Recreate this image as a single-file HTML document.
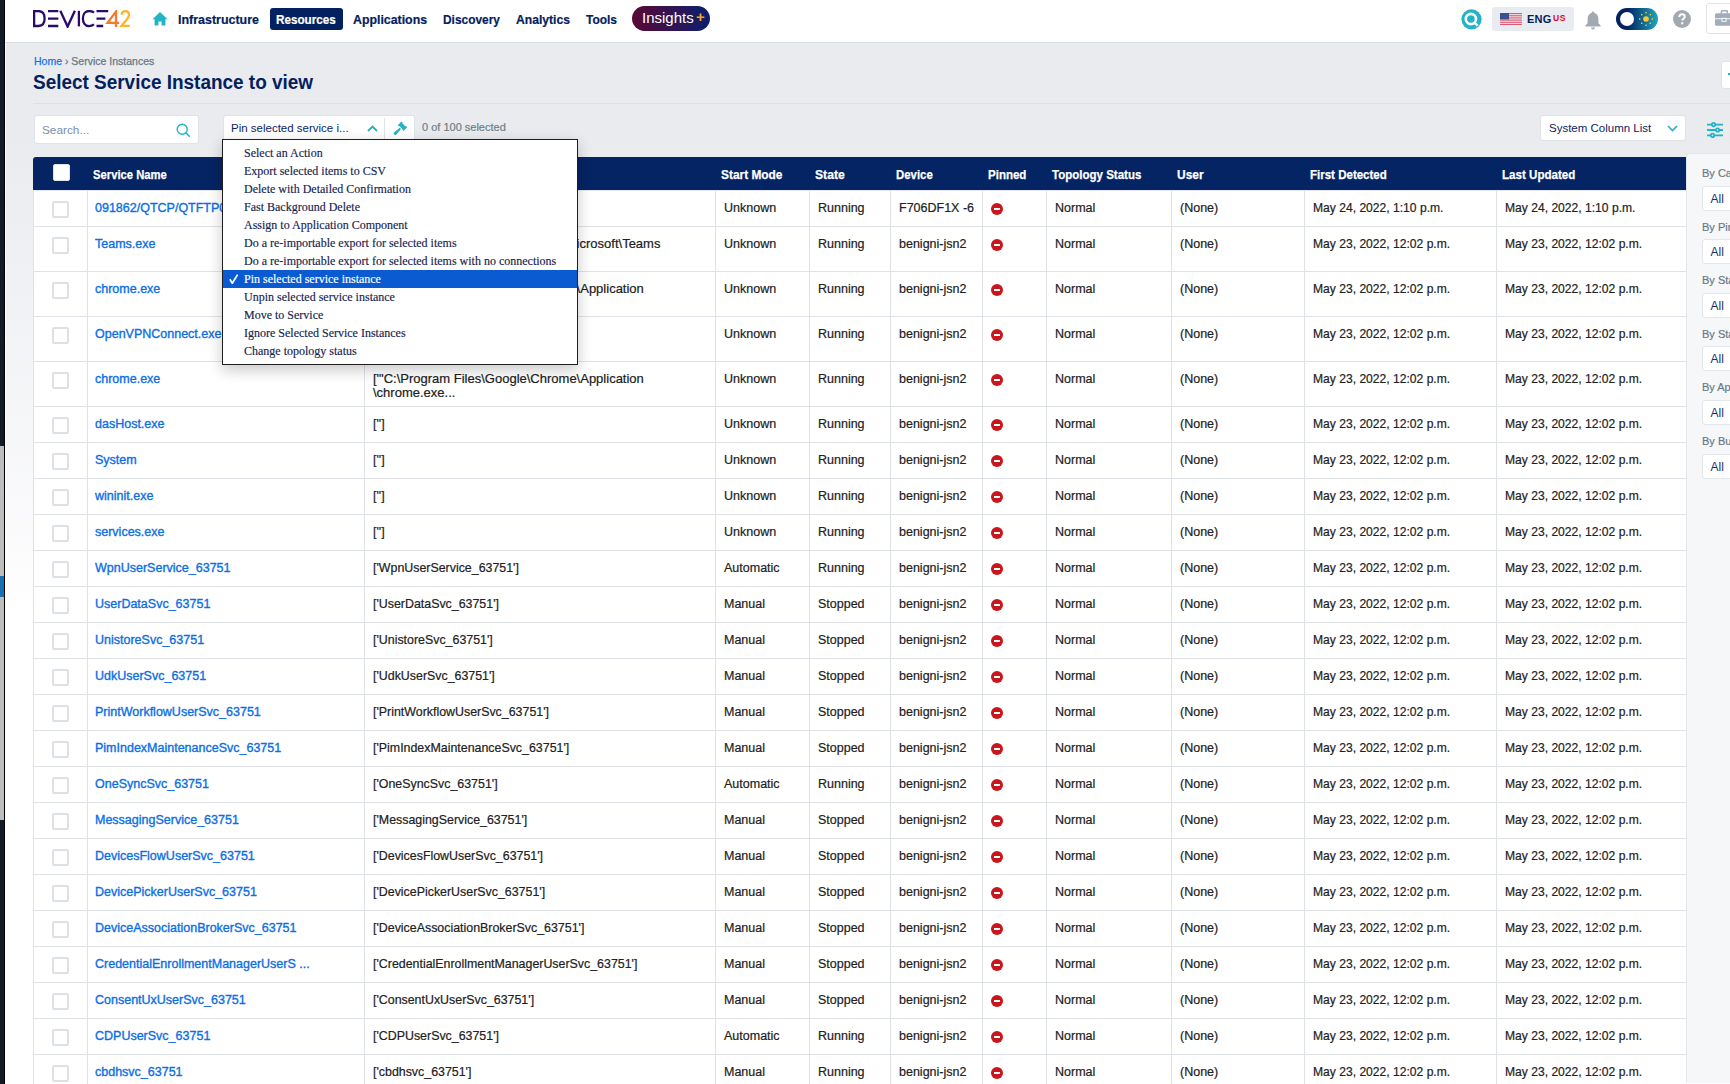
<!DOCTYPE html>
<html><head><meta charset="utf-8"><style>
*{box-sizing:border-box;margin:0;padding:0}
html,body{width:1730px;height:1084px;overflow:hidden}
body{position:relative;font-family:"Liberation Sans",sans-serif;background:linear-gradient(180deg,#e9ebef 0px,#e9ebef 130px,#fcfcfd 570px,#fff 610px);}
#strip{position:absolute;left:0;top:0;width:5px;height:1084px;background:#131b29;border-right:1px solid #000}
#strip .g{position:absolute;left:0;top:446px;width:4px;height:374px;background:#bdbdbd}
#strip .bl{position:absolute;left:0;top:576px;width:4px;height:21px;background:#1a6fb1}
#wline{position:absolute;left:5px;top:43px;width:1px;height:1041px;background:#fff}
#hdr{position:absolute;left:5px;top:0;width:1725px;height:43px;background:#fff;border-bottom:1px solid #dadde2}
#logo{position:absolute;left:28px;top:10px}
.nav{position:absolute;top:11.5px;-webkit-text-stroke:0.2px currentColor;font-size:13px;font-weight:700;color:#03215f;line-height:16px;white-space:nowrap;transform-origin:0 0}
#res{position:absolute;left:265px;top:8px;width:73px;height:22px;background:#03215f;border-radius:3px}
#ins{position:absolute;left:627px;top:6px;width:78px;height:25px;border-radius:13px;background:linear-gradient(90deg,#5a0834,#0a1f6e)}
#ins span{position:absolute;left:10px;top:4px;color:#fff;font-size:15px;line-height:16px}
#ins b{position:absolute;left:64px;top:3px;color:#f7a11a;font-size:15px;line-height:16px;font-weight:700}
#bc{position:absolute;left:34px;top:54.6px;font-size:10.5px;line-height:13px;color:#6a7884;white-space:nowrap;-webkit-text-stroke:0.25px currentColor}
#bc a{color:#1673e6;text-decoration:none}
#title{position:absolute;left:33px;top:71px;transform:scaleX(0.947);transform-origin:0 0;font-size:20px;font-weight:700;color:#03215f;line-height:22px;white-space:nowrap}
#hr{position:absolute;left:33px;top:103px;width:1697px;height:1px;background:#dcdfe4}
#search{position:absolute;left:34px;top:115px;width:165px;height:29px;background:#fff;border:1px solid #dfe2e6;border-radius:3px}
#search span{position:absolute;left:7px;top:7px;font-size:11.8px;line-height:14px;color:#7b8eae}
#sel{position:absolute;left:223px;top:115px;width:192px;height:28px;background:#fff;border:1px solid #dfe2e6;border-radius:3px}
#sel span{position:absolute;left:7px;top:5px;font-size:11.5px;line-height:14px;color:#0c2461;white-space:nowrap}
#sel .dv{position:absolute;left:160px;top:2px;width:1px;height:24px;background:#dfe2e6}
#cnt{position:absolute;left:422px;top:121px;font-size:11px;line-height:13px;color:#6e7e8a;-webkit-text-stroke:0.2px currentColor;white-space:nowrap}
#scl{position:absolute;left:1540px;top:115px;width:146px;height:26px;background:#fff;border:1px solid #dfe2e6;border-radius:3px}
#scl span{position:absolute;left:8px;top:6px;font-size:11.5px;line-height:13px;color:#0c2461;white-space:nowrap}
#tbl{position:absolute;left:33px;top:157px;width:1653px}
#thead{position:absolute;left:0;top:0;width:1653px;height:33px;background:#052463;border-radius:3px 0 0 0}
.hc{position:absolute;top:10.5px;margin-left:6px;-webkit-text-stroke:0.25px currentColor;font-size:12.8px;font-weight:700;color:#fff;line-height:14px;white-space:nowrap;transform-origin:0 0}
.hcb{position:absolute;left:20px;top:7px;width:17px;height:17px;background:#fff;border:1px solid #dfe2e7;border-radius:2px}
#tbody{position:absolute;left:0;top:33px;width:1653px;height:900px;background:#fff}
.r{position:absolute;left:0;width:1653px;border-bottom:1px solid #dfe2e7}
.c{position:absolute;top:0;height:100%;-webkit-text-stroke:0.2px currentColor;padding:11px 0 0 9px;font-size:12.5px;line-height:13px;color:#212121;white-space:nowrap;overflow:hidden}
.c.d{font-size:12.4px;padding-top:10.6px}
.r1 .c.d{padding-top:11.6px}
.c.d2{font-size:13px;line-height:13.5px;padding-top:10.2px}
.lk{color:#0b6ee6;position:relative;left:-1px;-webkit-text-stroke:0.35px currentColor}
.r1 .c{padding-top:12px}
.r1 .cb{top:11px}
.dt{font-size:12.1px}
.cb{position:absolute;left:19px;top:10px;width:17px;height:17px;border:2px solid #dde0e5;border-radius:2px;background:#fff}
.vl{position:absolute;top:1px;width:1px;height:900px;background:#dfe2e7}
.pin{position:absolute;left:9px;top:12px;width:12px;height:12px;border-radius:50%;background:#c9161d}
.r1 .pin{top:13px}
.pin:after{content:"";position:absolute;left:3px;top:5px;width:6px;height:2px;background:#fff}
#fpanel{position:absolute;left:1686px;top:153px;width:44px;height:930px;background:#f6f7f9;border-left:1px solid #e3e6ea;border-top:1px solid #e3e6ea;border-top-left-radius:3px}
.fl{position:absolute;left:15px;font-size:11px;line-height:13px;color:#6a7884;white-space:nowrap;-webkit-text-stroke:0.2px currentColor}
.fb{position:absolute;left:15px;width:60px;height:25px;background:#fff;border:1px solid #e3e6ea;border-radius:3px;font-size:12px;line-height:14px;color:#1c2f6b;padding:5px 0 0 7.5px}
#menu{position:absolute;left:222px;top:139px;width:356px;height:226px;background:#fff;border:1px solid #1f1f1f;padding-top:4px;box-shadow:0 5px 14px rgba(0,0,0,0.22)}
.mi{position:relative;height:18px;-webkit-text-stroke:0.15px currentColor;padding-left:21px;font-family:"Liberation Serif",serif;font-size:12px;line-height:18px;color:#15234f;white-space:nowrap}
.mi.sel{background:#0a5bd2;color:#fff}
.mi b{position:absolute;left:5.5px;top:0;font-weight:700;font-family:"Liberation Sans",sans-serif;font-size:13.5px;line-height:18px}

</style></head><body>
<div id="hdr"></div>
<div id="strip"><div class="g"></div><div class="bl"></div></div>
<div id="wline"></div>
<svg id="logo" style="position:absolute;left:33px;top:10px" width="98" height="18" viewBox="0 0 98 18">
 <g fill="none" stroke="#2a0b6d" stroke-width="2.3">
  <path d="M1.1 1.1H5.5C9.8 1.1 11.6 4.6 11.6 8.6C11.6 12.6 9.8 16 5.5 16H1.1Z"/>
  <path d="M15 1.1H25.3M15 8.6H25.3M15 16H25.3"/>
  <path d="M27.3 0.8L34.6 16.6L41.9 0.8"/>
  <path d="M45.9 0.8V16.4"/>
  <path d="M61 2.6C59.4 1.4 57.8 1 56 1C51.8 1 49.9 4.6 49.9 8.6C49.9 12.6 51.8 16.1 56 16.1C57.8 16.1 59.4 15.6 61 14.4"/>
  <path d="M63.5 1.2H75.2M63.5 8.6H72.4M63.5 16H70.2"/>
 </g>
 <path d="M83 17V1.6L74.6 12.8H86.2" fill="none" stroke="#f47a2f" stroke-width="2.3"/>
 <path d="M88.4 4.6C89 2.4 90.6 1.2 92.3 1.2C94.6 1.2 96 2.9 96 5C96 7.3 94.7 8.8 93 10.5L88.4 15.9H96.8" fill="none" stroke="#fbb42b" stroke-width="2.3"/>
</svg>
<svg style="position:absolute;left:152px;top:12px" width="16" height="14" viewBox="0 0 16 14"><path d="M8 0L0.5 7.2H2.6V13.6H6.4V9.6H9.6V13.6H13.4V7.2H15.5Z" fill="#22b3c6"/></svg>
<div class="nav" style="left:178px;transform:scaleX(0.958)">Infrastructure</div>
<div id="res" style="left:270px"></div>
<div class="nav" style="left:276px;color:#fff;transform:scaleX(0.9)">Resources</div>
<div class="nav" style="left:353px;transform:scaleX(0.949)">Applications</div>
<div class="nav" style="left:443px;transform:scaleX(0.916)">Discovery</div>
<div class="nav" style="left:516px;transform:scaleX(0.934)">Analytics</div>
<div class="nav" style="left:586px;transform:scaleX(0.92)">Tools</div>
<div id="ins" style="left:632px"><span>Insights</span><b>+</b></div>

<svg style="position:absolute;left:1460.5px;top:8.5px" width="21" height="21" viewBox="0 0 21 21"><circle cx="10.5" cy="10.3" r="10.1" fill="#22b3c6"/><circle cx="9.9" cy="10" r="5.1" fill="none" stroke="#fff" stroke-width="2.6"/><path d="M13.4 13.6L16.6 16.6" stroke="#fff" stroke-width="2.6"/></svg>
<div style="position:absolute;left:1492px;top:7px;width:82px;height:24px;background:#e8ebef;border-radius:3px"></div>
<svg style="position:absolute;left:1500px;top:13px" width="22" height="12" viewBox="0 0 22 12"><rect width="22" height="12" fill="#f4eef0"/><g fill="#d9506a"><rect y="0.00" width="22" height="0.92"/><rect y="1.85" width="22" height="0.92"/><rect y="3.69" width="22" height="0.92"/><rect y="5.54" width="22" height="0.92"/><rect y="7.38" width="22" height="0.92"/><rect y="9.23" width="22" height="0.92"/><rect y="11.08" width="22" height="0.92"/></g><rect width="9" height="6.46" fill="#3d4f93"/></svg>
<div style="position:absolute;left:1527px;top:12px;font-size:11px;font-weight:700;color:#03215f;letter-spacing:0.2px;line-height:14px">ENG</div>
<div style="position:absolute;left:1553px;top:12.7px;font-size:8.5px;font-weight:700;color:#e8001c;letter-spacing:0.5px;line-height:10px">US</div>
<svg style="position:absolute;left:1585px;top:11px" width="16" height="19" viewBox="0 0 16 19"><path d="M8 0.5C8.8 0.5 9.2 1 9.2 1.8C12 2.6 13.4 5 13.4 8V12.2L15.6 14.4V15.6H0.4V14.4L2.6 12.2V8C2.6 5 4 2.6 6.8 1.8C6.8 1 7.2 0.5 8 0.5Z" fill="#a3a9b1"/><path d="M6 16.6H10C10 17.8 9 18.4 8 18.4C7 18.4 6 17.8 6 16.6Z" fill="#a3a9b1"/></svg>
<div style="position:absolute;left:1616px;top:8px;width:42px;height:22px;border-radius:11px;background:linear-gradient(90deg,#03205f 25%,#1fa6bd)"></div>
<div style="position:absolute;left:1620px;top:12px;width:14px;height:14px;border-radius:50%;background:#fff"></div>
<svg style="position:absolute;left:1639px;top:12px" width="14" height="14" viewBox="0 0 14 14"><circle cx="7" cy="7" r="2.8" fill="#fbc933"/><g fill="#fbc933"><rect x="6.3" y="0" width="1.4" height="1.4"/><rect x="6.3" y="12.6" width="1.4" height="1.4"/><rect x="0" y="6.3" width="1.4" height="1.4"/><rect x="12.6" y="6.3" width="1.4" height="1.4"/><rect x="2" y="2" width="1.4" height="1.4"/><rect x="10.6" y="2" width="1.4" height="1.4"/><rect x="2" y="10.6" width="1.4" height="1.4"/><rect x="10.6" y="10.6" width="1.4" height="1.4"/></g></svg>
<svg style="position:absolute;left:1673px;top:10px" width="18" height="18" viewBox="0 0 18 18"><circle cx="9" cy="9" r="9" fill="#a3a9b1"/><path d="M6.3 7C6.3 5.3 7.5 4.3 9.1 4.3C10.7 4.3 11.8 5.3 11.8 6.6C11.8 8.5 9.3 8.6 9.3 10.6" fill="none" stroke="#fff" stroke-width="2"/><rect x="8.2" y="12.2" width="2.1" height="2.1" fill="#fff"/></svg>
<div style="position:absolute;left:1706px;top:3px;width:40px;height:31px;background:#fff;border:1px solid #e0e3e7;border-radius:3px"></div>
<svg style="position:absolute;left:1715px;top:9.5px" width="16" height="17" viewBox="0 0 16 17"><path d="M6.4 3.4V1.7Q6.4 0.7 7.4 0.7H11.4Q12.4 0.7 12.4 1.7V3.4" fill="none" stroke="#a2adbb" stroke-width="1.5"/><rect x="0" y="3.3" width="18" height="12.5" rx="1.6" fill="#a2adbb"/><rect x="0" y="8.3" width="18" height="0.9" fill="#fff"/><rect x="6.9" y="8.3" width="4.2" height="3" fill="#a2adbb" stroke="#fff" stroke-width="0.9"/></svg>

<div id="bc"><a>Home</a> › Service Instances</div>
<div id="title">Select Service Instance to view</div>
<div style="position:absolute;left:1721px;top:61px;width:20px;height:28px;background:#fff;border:1px solid #dfe2e6;border-radius:3px"></div><div style="position:absolute;left:1728px;top:73px;width:3px;height:2px;background:#22b3c6"></div>
<div id="hr"></div>
<div id="search"><span>Search...</span>
<svg style="position:absolute;left:141px;top:7px" width="15" height="15" viewBox="0 0 15 15"><circle cx="6.2" cy="6.2" r="5" fill="none" stroke="#22b3c6" stroke-width="1.4"/><path d="M9.8 9.8L13.8 13.8" stroke="#22b3c6" stroke-width="1.6"/></svg>
</div>
<div id="sel"><span>Pin selected service i...</span>
<svg style="position:absolute;left:143px;top:8.5px" width="11" height="7" viewBox="0 0 11 7"><path d="M1 6L5.5 1.5L10 6" fill="none" stroke="#22b3c6" stroke-width="1.8"/></svg>
<div class="dv"></div>
<svg style="position:absolute;left:169px;top:4px" width="16" height="16" viewBox="0 0 16 16"><g transform="translate(9.5 6.25) rotate(45)" fill="#22b3c6"><path d="M-4.1 -2.6H-2.3V-2H2.3V-2.6H4.1V2.6H2.3V2H-2.3V2.6H-4.1Z"/><path d="M-0.9 3.1H0.9L1.5 10.4Q1.5 11.6 0 11.6Q-1.5 11.6 -1.5 10.4Z"/></g></svg>
</div>
<div id="cnt">0 of 100 selected</div>
<div id="scl"><span>System Column List</span>
<svg style="position:absolute;left:126px;top:8.5px" width="11" height="7" viewBox="0 0 11 7"><path d="M1 1L5.5 5.5L10 1" fill="none" stroke="#22b3c6" stroke-width="1.6"/></svg>
</div>
<svg style="position:absolute;left:1707px;top:122px" width="16" height="16" viewBox="0 0 16 16"><g stroke="#22b3c6" stroke-width="1.8" fill="#ebedf1"><path d="M0 2.6H16M0 8H16M0 13.4H16" fill="none"/><circle cx="6.5" cy="2.6" r="1.7"/><circle cx="10.5" cy="8" r="1.7"/><circle cx="5.5" cy="13.4" r="1.7"/></g></svg>

<div id="tbl">
<div id="thead"><div class="hcb"></div><div class="hc" style="left:54px;transform:scaleX(0.88)">Service Name</div><div class="hc" style="left:331px;transform:scaleX(0.92)">Command</div><div class="hc" style="left:682px;transform:scaleX(0.93)">Start Mode</div><div class="hc" style="left:776px;transform:scaleX(0.95)">State</div><div class="hc" style="left:857px;transform:scaleX(0.89)">Device</div><div class="hc" style="left:949px;transform:scaleX(0.9)">Pinned</div><div class="hc" style="left:1013px;transform:scaleX(0.9)">Topology Status</div><div class="hc" style="left:1138px;transform:scaleX(0.935)">User</div><div class="hc" style="left:1271px;transform:scaleX(0.9)">First Detected</div><div class="hc" style="left:1463px;transform:scaleX(0.905)">Last Updated</div></div>
<div id="tbody"><div class="r r1" style="top:0px;height:37px"><div class="cb"></div><div class="c" style="left:54px;width:277px"><span class="lk">091862/QTCP/QTFTP0</span></div><div class="c d" style="left:331px;width:351px"></div><div class="c" style="left:682px;width:94px">Unknown</div><div class="c" style="left:776px;width:81px">Running</div><div class="c" style="left:857px;width:92px">F706DF1X -6</div><div class="c" style="left:949px;width:64px"><i class="pin"></i></div><div class="c" style="left:1013px;width:125px">Normal</div><div class="c" style="left:1138px;width:133px">(None)</div><div class="c dt" style="left:1271px;width:192px">May 24, 2022, 1:10 p.m.</div><div class="c dt" style="left:1463px;width:190px">May 24, 2022, 1:10 p.m.</div></div><div class="r" style="top:37px;height:45px"><div class="cb"></div><div class="c" style="left:54px;width:277px"><span class="lk">Teams.exe</span></div><div class="c d d2" style="left:331px;width:351px">[&#39;"C:\Users\admin\AppData\Local\Microsoft\Teams<br>\current\Teams.exe...</div><div class="c" style="left:682px;width:94px">Unknown</div><div class="c" style="left:776px;width:81px">Running</div><div class="c" style="left:857px;width:92px">benigni-jsn2</div><div class="c" style="left:949px;width:64px"><i class="pin"></i></div><div class="c" style="left:1013px;width:125px">Normal</div><div class="c" style="left:1138px;width:133px">(None)</div><div class="c dt" style="left:1271px;width:192px">May 23, 2022, 12:02 p.m.</div><div class="c dt" style="left:1463px;width:190px">May 23, 2022, 12:02 p.m.</div></div><div class="r" style="top:82px;height:45px"><div class="cb"></div><div class="c" style="left:54px;width:277px"><span class="lk">chrome.exe</span></div><div class="c d d2" style="left:331px;width:351px">[&#39;"C:\Program Files\Google\Chrome\Application<br>\chrome.exe...</div><div class="c" style="left:682px;width:94px">Unknown</div><div class="c" style="left:776px;width:81px">Running</div><div class="c" style="left:857px;width:92px">benigni-jsn2</div><div class="c" style="left:949px;width:64px"><i class="pin"></i></div><div class="c" style="left:1013px;width:125px">Normal</div><div class="c" style="left:1138px;width:133px">(None)</div><div class="c dt" style="left:1271px;width:192px">May 23, 2022, 12:02 p.m.</div><div class="c dt" style="left:1463px;width:190px">May 23, 2022, 12:02 p.m.</div></div><div class="r" style="top:127px;height:45px"><div class="cb"></div><div class="c" style="left:54px;width:277px"><span class="lk">OpenVPNConnect.exe</span></div><div class="c d d2" style="left:331px;width:351px">[&#39;"C:\Program Files\OpenVPN<br>Connect\OpenVPNConnect.exe...</div><div class="c" style="left:682px;width:94px">Unknown</div><div class="c" style="left:776px;width:81px">Running</div><div class="c" style="left:857px;width:92px">benigni-jsn2</div><div class="c" style="left:949px;width:64px"><i class="pin"></i></div><div class="c" style="left:1013px;width:125px">Normal</div><div class="c" style="left:1138px;width:133px">(None)</div><div class="c dt" style="left:1271px;width:192px">May 23, 2022, 12:02 p.m.</div><div class="c dt" style="left:1463px;width:190px">May 23, 2022, 12:02 p.m.</div></div><div class="r" style="top:172px;height:45px"><div class="cb"></div><div class="c" style="left:54px;width:277px"><span class="lk">chrome.exe</span></div><div class="c d d2" style="left:331px;width:351px">[&#39;"C:\Program Files\Google\Chrome\Application<br>\chrome.exe...</div><div class="c" style="left:682px;width:94px">Unknown</div><div class="c" style="left:776px;width:81px">Running</div><div class="c" style="left:857px;width:92px">benigni-jsn2</div><div class="c" style="left:949px;width:64px"><i class="pin"></i></div><div class="c" style="left:1013px;width:125px">Normal</div><div class="c" style="left:1138px;width:133px">(None)</div><div class="c dt" style="left:1271px;width:192px">May 23, 2022, 12:02 p.m.</div><div class="c dt" style="left:1463px;width:190px">May 23, 2022, 12:02 p.m.</div></div><div class="r" style="top:217px;height:36px"><div class="cb"></div><div class="c" style="left:54px;width:277px"><span class="lk">dasHost.exe</span></div><div class="c d" style="left:331px;width:351px">[&#39;&#39;]</div><div class="c" style="left:682px;width:94px">Unknown</div><div class="c" style="left:776px;width:81px">Running</div><div class="c" style="left:857px;width:92px">benigni-jsn2</div><div class="c" style="left:949px;width:64px"><i class="pin"></i></div><div class="c" style="left:1013px;width:125px">Normal</div><div class="c" style="left:1138px;width:133px">(None)</div><div class="c dt" style="left:1271px;width:192px">May 23, 2022, 12:02 p.m.</div><div class="c dt" style="left:1463px;width:190px">May 23, 2022, 12:02 p.m.</div></div><div class="r" style="top:253px;height:36px"><div class="cb"></div><div class="c" style="left:54px;width:277px"><span class="lk">System</span></div><div class="c d" style="left:331px;width:351px">[&#39;&#39;]</div><div class="c" style="left:682px;width:94px">Unknown</div><div class="c" style="left:776px;width:81px">Running</div><div class="c" style="left:857px;width:92px">benigni-jsn2</div><div class="c" style="left:949px;width:64px"><i class="pin"></i></div><div class="c" style="left:1013px;width:125px">Normal</div><div class="c" style="left:1138px;width:133px">(None)</div><div class="c dt" style="left:1271px;width:192px">May 23, 2022, 12:02 p.m.</div><div class="c dt" style="left:1463px;width:190px">May 23, 2022, 12:02 p.m.</div></div><div class="r" style="top:289px;height:36px"><div class="cb"></div><div class="c" style="left:54px;width:277px"><span class="lk">wininit.exe</span></div><div class="c d" style="left:331px;width:351px">[&#39;&#39;]</div><div class="c" style="left:682px;width:94px">Unknown</div><div class="c" style="left:776px;width:81px">Running</div><div class="c" style="left:857px;width:92px">benigni-jsn2</div><div class="c" style="left:949px;width:64px"><i class="pin"></i></div><div class="c" style="left:1013px;width:125px">Normal</div><div class="c" style="left:1138px;width:133px">(None)</div><div class="c dt" style="left:1271px;width:192px">May 23, 2022, 12:02 p.m.</div><div class="c dt" style="left:1463px;width:190px">May 23, 2022, 12:02 p.m.</div></div><div class="r" style="top:325px;height:36px"><div class="cb"></div><div class="c" style="left:54px;width:277px"><span class="lk">services.exe</span></div><div class="c d" style="left:331px;width:351px">[&#39;&#39;]</div><div class="c" style="left:682px;width:94px">Unknown</div><div class="c" style="left:776px;width:81px">Running</div><div class="c" style="left:857px;width:92px">benigni-jsn2</div><div class="c" style="left:949px;width:64px"><i class="pin"></i></div><div class="c" style="left:1013px;width:125px">Normal</div><div class="c" style="left:1138px;width:133px">(None)</div><div class="c dt" style="left:1271px;width:192px">May 23, 2022, 12:02 p.m.</div><div class="c dt" style="left:1463px;width:190px">May 23, 2022, 12:02 p.m.</div></div><div class="r" style="top:361px;height:36px"><div class="cb"></div><div class="c" style="left:54px;width:277px"><span class="lk">WpnUserService_63751</span></div><div class="c d" style="left:331px;width:351px">[&#39;WpnUserService_63751&#39;]</div><div class="c" style="left:682px;width:94px">Automatic</div><div class="c" style="left:776px;width:81px">Running</div><div class="c" style="left:857px;width:92px">benigni-jsn2</div><div class="c" style="left:949px;width:64px"><i class="pin"></i></div><div class="c" style="left:1013px;width:125px">Normal</div><div class="c" style="left:1138px;width:133px">(None)</div><div class="c dt" style="left:1271px;width:192px">May 23, 2022, 12:02 p.m.</div><div class="c dt" style="left:1463px;width:190px">May 23, 2022, 12:02 p.m.</div></div><div class="r" style="top:397px;height:36px"><div class="cb"></div><div class="c" style="left:54px;width:277px"><span class="lk">UserDataSvc_63751</span></div><div class="c d" style="left:331px;width:351px">[&#39;UserDataSvc_63751&#39;]</div><div class="c" style="left:682px;width:94px">Manual</div><div class="c" style="left:776px;width:81px">Stopped</div><div class="c" style="left:857px;width:92px">benigni-jsn2</div><div class="c" style="left:949px;width:64px"><i class="pin"></i></div><div class="c" style="left:1013px;width:125px">Normal</div><div class="c" style="left:1138px;width:133px">(None)</div><div class="c dt" style="left:1271px;width:192px">May 23, 2022, 12:02 p.m.</div><div class="c dt" style="left:1463px;width:190px">May 23, 2022, 12:02 p.m.</div></div><div class="r" style="top:433px;height:36px"><div class="cb"></div><div class="c" style="left:54px;width:277px"><span class="lk">UnistoreSvc_63751</span></div><div class="c d" style="left:331px;width:351px">[&#39;UnistoreSvc_63751&#39;]</div><div class="c" style="left:682px;width:94px">Manual</div><div class="c" style="left:776px;width:81px">Stopped</div><div class="c" style="left:857px;width:92px">benigni-jsn2</div><div class="c" style="left:949px;width:64px"><i class="pin"></i></div><div class="c" style="left:1013px;width:125px">Normal</div><div class="c" style="left:1138px;width:133px">(None)</div><div class="c dt" style="left:1271px;width:192px">May 23, 2022, 12:02 p.m.</div><div class="c dt" style="left:1463px;width:190px">May 23, 2022, 12:02 p.m.</div></div><div class="r" style="top:469px;height:36px"><div class="cb"></div><div class="c" style="left:54px;width:277px"><span class="lk">UdkUserSvc_63751</span></div><div class="c d" style="left:331px;width:351px">[&#39;UdkUserSvc_63751&#39;]</div><div class="c" style="left:682px;width:94px">Manual</div><div class="c" style="left:776px;width:81px">Stopped</div><div class="c" style="left:857px;width:92px">benigni-jsn2</div><div class="c" style="left:949px;width:64px"><i class="pin"></i></div><div class="c" style="left:1013px;width:125px">Normal</div><div class="c" style="left:1138px;width:133px">(None)</div><div class="c dt" style="left:1271px;width:192px">May 23, 2022, 12:02 p.m.</div><div class="c dt" style="left:1463px;width:190px">May 23, 2022, 12:02 p.m.</div></div><div class="r" style="top:505px;height:36px"><div class="cb"></div><div class="c" style="left:54px;width:277px"><span class="lk">PrintWorkflowUserSvc_63751</span></div><div class="c d" style="left:331px;width:351px">[&#39;PrintWorkflowUserSvc_63751&#39;]</div><div class="c" style="left:682px;width:94px">Manual</div><div class="c" style="left:776px;width:81px">Stopped</div><div class="c" style="left:857px;width:92px">benigni-jsn2</div><div class="c" style="left:949px;width:64px"><i class="pin"></i></div><div class="c" style="left:1013px;width:125px">Normal</div><div class="c" style="left:1138px;width:133px">(None)</div><div class="c dt" style="left:1271px;width:192px">May 23, 2022, 12:02 p.m.</div><div class="c dt" style="left:1463px;width:190px">May 23, 2022, 12:02 p.m.</div></div><div class="r" style="top:541px;height:36px"><div class="cb"></div><div class="c" style="left:54px;width:277px"><span class="lk">PimIndexMaintenanceSvc_63751</span></div><div class="c d" style="left:331px;width:351px">[&#39;PimIndexMaintenanceSvc_63751&#39;]</div><div class="c" style="left:682px;width:94px">Manual</div><div class="c" style="left:776px;width:81px">Stopped</div><div class="c" style="left:857px;width:92px">benigni-jsn2</div><div class="c" style="left:949px;width:64px"><i class="pin"></i></div><div class="c" style="left:1013px;width:125px">Normal</div><div class="c" style="left:1138px;width:133px">(None)</div><div class="c dt" style="left:1271px;width:192px">May 23, 2022, 12:02 p.m.</div><div class="c dt" style="left:1463px;width:190px">May 23, 2022, 12:02 p.m.</div></div><div class="r" style="top:577px;height:36px"><div class="cb"></div><div class="c" style="left:54px;width:277px"><span class="lk">OneSyncSvc_63751</span></div><div class="c d" style="left:331px;width:351px">[&#39;OneSyncSvc_63751&#39;]</div><div class="c" style="left:682px;width:94px">Automatic</div><div class="c" style="left:776px;width:81px">Running</div><div class="c" style="left:857px;width:92px">benigni-jsn2</div><div class="c" style="left:949px;width:64px"><i class="pin"></i></div><div class="c" style="left:1013px;width:125px">Normal</div><div class="c" style="left:1138px;width:133px">(None)</div><div class="c dt" style="left:1271px;width:192px">May 23, 2022, 12:02 p.m.</div><div class="c dt" style="left:1463px;width:190px">May 23, 2022, 12:02 p.m.</div></div><div class="r" style="top:613px;height:36px"><div class="cb"></div><div class="c" style="left:54px;width:277px"><span class="lk">MessagingService_63751</span></div><div class="c d" style="left:331px;width:351px">[&#39;MessagingService_63751&#39;]</div><div class="c" style="left:682px;width:94px">Manual</div><div class="c" style="left:776px;width:81px">Stopped</div><div class="c" style="left:857px;width:92px">benigni-jsn2</div><div class="c" style="left:949px;width:64px"><i class="pin"></i></div><div class="c" style="left:1013px;width:125px">Normal</div><div class="c" style="left:1138px;width:133px">(None)</div><div class="c dt" style="left:1271px;width:192px">May 23, 2022, 12:02 p.m.</div><div class="c dt" style="left:1463px;width:190px">May 23, 2022, 12:02 p.m.</div></div><div class="r" style="top:649px;height:36px"><div class="cb"></div><div class="c" style="left:54px;width:277px"><span class="lk">DevicesFlowUserSvc_63751</span></div><div class="c d" style="left:331px;width:351px">[&#39;DevicesFlowUserSvc_63751&#39;]</div><div class="c" style="left:682px;width:94px">Manual</div><div class="c" style="left:776px;width:81px">Stopped</div><div class="c" style="left:857px;width:92px">benigni-jsn2</div><div class="c" style="left:949px;width:64px"><i class="pin"></i></div><div class="c" style="left:1013px;width:125px">Normal</div><div class="c" style="left:1138px;width:133px">(None)</div><div class="c dt" style="left:1271px;width:192px">May 23, 2022, 12:02 p.m.</div><div class="c dt" style="left:1463px;width:190px">May 23, 2022, 12:02 p.m.</div></div><div class="r" style="top:685px;height:36px"><div class="cb"></div><div class="c" style="left:54px;width:277px"><span class="lk">DevicePickerUserSvc_63751</span></div><div class="c d" style="left:331px;width:351px">[&#39;DevicePickerUserSvc_63751&#39;]</div><div class="c" style="left:682px;width:94px">Manual</div><div class="c" style="left:776px;width:81px">Stopped</div><div class="c" style="left:857px;width:92px">benigni-jsn2</div><div class="c" style="left:949px;width:64px"><i class="pin"></i></div><div class="c" style="left:1013px;width:125px">Normal</div><div class="c" style="left:1138px;width:133px">(None)</div><div class="c dt" style="left:1271px;width:192px">May 23, 2022, 12:02 p.m.</div><div class="c dt" style="left:1463px;width:190px">May 23, 2022, 12:02 p.m.</div></div><div class="r" style="top:721px;height:36px"><div class="cb"></div><div class="c" style="left:54px;width:277px"><span class="lk">DeviceAssociationBrokerSvc_63751</span></div><div class="c d" style="left:331px;width:351px">[&#39;DeviceAssociationBrokerSvc_63751&#39;]</div><div class="c" style="left:682px;width:94px">Manual</div><div class="c" style="left:776px;width:81px">Stopped</div><div class="c" style="left:857px;width:92px">benigni-jsn2</div><div class="c" style="left:949px;width:64px"><i class="pin"></i></div><div class="c" style="left:1013px;width:125px">Normal</div><div class="c" style="left:1138px;width:133px">(None)</div><div class="c dt" style="left:1271px;width:192px">May 23, 2022, 12:02 p.m.</div><div class="c dt" style="left:1463px;width:190px">May 23, 2022, 12:02 p.m.</div></div><div class="r" style="top:757px;height:36px"><div class="cb"></div><div class="c" style="left:54px;width:277px"><span class="lk">CredentialEnrollmentManagerUserS ...</span></div><div class="c d" style="left:331px;width:351px">[&#39;CredentialEnrollmentManagerUserSvc_63751&#39;]</div><div class="c" style="left:682px;width:94px">Manual</div><div class="c" style="left:776px;width:81px">Stopped</div><div class="c" style="left:857px;width:92px">benigni-jsn2</div><div class="c" style="left:949px;width:64px"><i class="pin"></i></div><div class="c" style="left:1013px;width:125px">Normal</div><div class="c" style="left:1138px;width:133px">(None)</div><div class="c dt" style="left:1271px;width:192px">May 23, 2022, 12:02 p.m.</div><div class="c dt" style="left:1463px;width:190px">May 23, 2022, 12:02 p.m.</div></div><div class="r" style="top:793px;height:36px"><div class="cb"></div><div class="c" style="left:54px;width:277px"><span class="lk">ConsentUxUserSvc_63751</span></div><div class="c d" style="left:331px;width:351px">[&#39;ConsentUxUserSvc_63751&#39;]</div><div class="c" style="left:682px;width:94px">Manual</div><div class="c" style="left:776px;width:81px">Stopped</div><div class="c" style="left:857px;width:92px">benigni-jsn2</div><div class="c" style="left:949px;width:64px"><i class="pin"></i></div><div class="c" style="left:1013px;width:125px">Normal</div><div class="c" style="left:1138px;width:133px">(None)</div><div class="c dt" style="left:1271px;width:192px">May 23, 2022, 12:02 p.m.</div><div class="c dt" style="left:1463px;width:190px">May 23, 2022, 12:02 p.m.</div></div><div class="r" style="top:829px;height:36px"><div class="cb"></div><div class="c" style="left:54px;width:277px"><span class="lk">CDPUserSvc_63751</span></div><div class="c d" style="left:331px;width:351px">[&#39;CDPUserSvc_63751&#39;]</div><div class="c" style="left:682px;width:94px">Automatic</div><div class="c" style="left:776px;width:81px">Running</div><div class="c" style="left:857px;width:92px">benigni-jsn2</div><div class="c" style="left:949px;width:64px"><i class="pin"></i></div><div class="c" style="left:1013px;width:125px">Normal</div><div class="c" style="left:1138px;width:133px">(None)</div><div class="c dt" style="left:1271px;width:192px">May 23, 2022, 12:02 p.m.</div><div class="c dt" style="left:1463px;width:190px">May 23, 2022, 12:02 p.m.</div></div><div class="r" style="top:865px;height:36px"><div class="cb"></div><div class="c" style="left:54px;width:277px"><span class="lk">cbdhsvc_63751</span></div><div class="c d" style="left:331px;width:351px">[&#39;cbdhsvc_63751&#39;]</div><div class="c" style="left:682px;width:94px">Manual</div><div class="c" style="left:776px;width:81px">Running</div><div class="c" style="left:857px;width:92px">benigni-jsn2</div><div class="c" style="left:949px;width:64px"><i class="pin"></i></div><div class="c" style="left:1013px;width:125px">Normal</div><div class="c" style="left:1138px;width:133px">(None)</div><div class="c dt" style="left:1271px;width:192px">May 23, 2022, 12:02 p.m.</div><div class="c dt" style="left:1463px;width:190px">May 23, 2022, 12:02 p.m.</div></div><div class="vl" style="left:0px"></div><div class="vl" style="left:54px"></div><div class="vl" style="left:331px"></div><div class="vl" style="left:682px"></div><div class="vl" style="left:776px"></div><div class="vl" style="left:857px"></div><div class="vl" style="left:949px"></div><div class="vl" style="left:1013px"></div><div class="vl" style="left:1138px"></div><div class="vl" style="left:1271px"></div><div class="vl" style="left:1463px"></div><div style="position:absolute;left:0;top:0;width:1653px;height:1px;background:#e6e8ec"></div></div>
</div>
<div id="fpanel"><div class="fl" style="top:13.0px">By Category</div><div class="fb" style="top:31.5px">All</div><div class="fl" style="top:66.6px">By Pinned</div><div class="fb" style="top:85.1px">All</div><div class="fl" style="top:120.2px">By State</div><div class="fb" style="top:138.7px">All</div><div class="fl" style="top:173.8px">By Start Mode</div><div class="fb" style="top:192.3px">All</div><div class="fl" style="top:227.4px">By Application</div><div class="fb" style="top:245.9px">All</div><div class="fl" style="top:281.0px">By Business App</div><div class="fb" style="top:299.5px">All</div></div>
<div id="menu"><div class="mi">Select an Action</div><div class="mi">Export selected items to CSV</div><div class="mi">Delete with Detailed Confirmation</div><div class="mi">Fast Background Delete</div><div class="mi">Assign to Application Component</div><div class="mi">Do a re-importable export for selected items</div><div class="mi">Do a re-importable export for selected items with no connections</div><div class="mi sel"><svg style="position:absolute;left:6px;top:4px" width="10" height="11" viewBox="0 0 10 11"><path d="M0.9 5.2L3.3 9.2L8.6 0.6" fill="none" stroke="#fff" stroke-width="1.7" stroke-linejoin="round"/></svg>Pin selected service instance</div><div class="mi">Unpin selected service instance</div><div class="mi">Move to Service</div><div class="mi">Ignore Selected Service Instances</div><div class="mi">Change topology status</div></div>
</body></html>
